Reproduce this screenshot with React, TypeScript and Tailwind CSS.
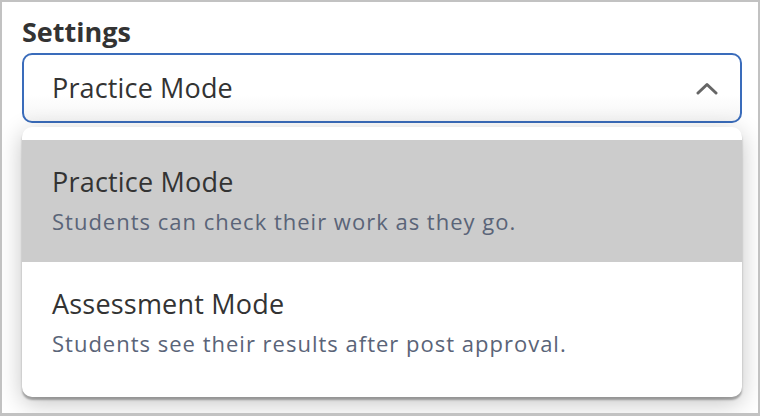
import React from "react";

const options = [
  { label: "Practice Mode", hint: "Students can check their work as they go.", active: true },
  { label: "Assessment Mode", hint: "Students see their results after post approval.", active: false },
];

function ChevronUp() {
  return (
    <svg width="22" height="14" viewBox="0 0 22 14" fill="none" aria-hidden="true">
      <path d="M2 12 L11 3.5 L20 12" stroke="#666666" strokeWidth="3" strokeLinecap="round" strokeLinejoin="round" />
    </svg>
  );
}

export default function App() {
  return (
    <div
      className="w-[760px] h-[416px] overflow-hidden bg-white border-2 border-b-[3px] border-[#c2c2c2] pl-5 pt-[14px]"
      style={{ fontFamily: "'Open Sans', 'Noto Sans', sans-serif" }}
    >
      <div className="w-[720px]">
        <label className="block text-[27px] leading-[32px] font-bold text-[#333333]">Settings</label>

        <button
          type="button"
          className="mt-[5px] w-full h-[70px] flex items-center justify-between pl-[28px] pr-[22px] rounded-[10px] border-2 border-[#3a6cbb] bg-gradient-to-b from-white from-60% to-[#f5f5f5] text-left"
        >
          <span className="text-[27px] tracking-[0.15px] text-[#333333]">Practice Mode</span>
          <ChevronUp />
        </button>

        <ul className="mt-[4px] py-[13px] rounded-[10px] bg-white shadow-[0_3px_2px_rgba(0,0,0,0.3),0_6px_24px_rgba(0,0,0,0.24)]">
          {options.map((o) => (
            <li
              key={o.label}
              className={`h-[122px] flex flex-col pt-[22px] px-[30px] ${o.active ? "bg-[#cccccc]" : "bg-white"}`}
            >
              <span className="text-[27px] leading-[40px] tracking-[0.2px] text-[#333333]">{o.label}</span>
              <span className="mt-[4px] text-[22px] leading-[30px] tracking-[1px] text-[#5a6478]">{o.hint}</span>
            </li>
          ))}
        </ul>
      </div>
    </div>
  );
}
